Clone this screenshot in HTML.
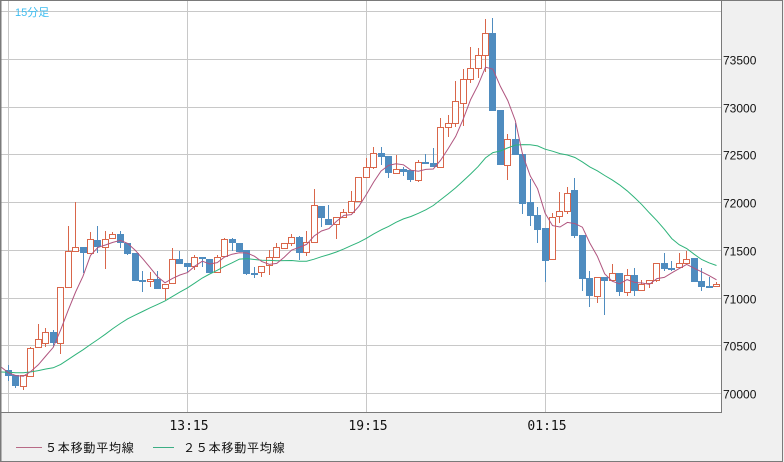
<!DOCTYPE html>
<html><head><meta charset="utf-8"><style>
html,body{margin:0;padding:0;width:784px;height:462px;overflow:hidden;background:#f0f0f0}
</style></head><body>
<svg id="s" width="784" height="462" xmlns="http://www.w3.org/2000/svg" style="position:absolute;left:0;top:0;font-family:'Liberation Sans','Noto Sans CJK JP',sans-serif">
<rect x="0" y="0" width="784" height="462" fill="#f0f0f0"/>
<rect x="1" y="1" width="720" height="411" fill="#fff"/>
<g id="grid" stroke="#c8c8c8" stroke-width="1"></g>
<g id="cand"></g>
<g id="ma"></g>
<line x1="721.5" y1="0" x2="721.5" y2="413" stroke="#7a7a7a"/>
<line x1="0" y1="412.5" x2="722" y2="412.5" stroke="#7a7a7a"/>
<rect x="0.5" y="0.5" width="782" height="461" fill="none" stroke="#7a7a7a"/>
<line x1="1" y1="0" x2="1" y2="462" stroke="#7a7a7a"/>
<text x="15" y="16" font-size="11" fill="#3cbcf0">15分足</text>
<g id="lab" font-size="12" fill="#111"></g>
<g font-size="13" fill="#111" font-family="'DejaVu Sans Mono','Liberation Mono',monospace">
<text x="189" y="430" text-anchor="middle">13:15</text>
<text x="368" y="430" text-anchor="middle">19:15</text>
<text x="547" y="430" text-anchor="middle">01:15</text>
</g>
<line x1="16" y1="447.5" x2="42" y2="447.5" stroke="#b86a86"/>
<text x="45" y="452" font-size="12" fill="#111" letter-spacing="0.8">５本移動平均線</text>
<line x1="153" y1="447.5" x2="174" y2="447.5" stroke="#3cae84"/>
<text x="183" y="452" font-size="12" fill="#111" letter-spacing="0.8">２５本移動平均線</text>
</svg>
<script>
(function(){
var NS="http://www.w3.org/2000/svg";
function el(p,t,a){var e=document.createElementNS(NS,t);for(var k in a)e.setAttribute(k,a[k]);p.appendChild(e);return e;}
var g=document.getElementById('grid'),lab=document.getElementById('lab');
var prices=[74000,73500,73000,72500,72000,71500,71000,70500,70000];
for(var i=0;i<9;i++){var y=Math.round(11+i*47.75)+0.5;el(g,'line',{x1:1,y1:y,x2:721,y2:y});
 if(i>0){var t=el(lab,'text',{x:723,y:y+5});t.textContent=prices[i];}}
[8,187,366,545].forEach(function(x){el(g,'line',{x1:x+0.5,y1:1,x2:x+0.5,y2:412});});
var D=[[370,376,365,381],[375,386,375,388],[386,375,375,390],[376,348,347,376],[347,339,324,347],[343,332,328,347],[332,343,330,347],[343,287,287,354],[287,251,226,287],[251,247,202,251],
[247,253,247,273],[253,239,232,253],[240,247,226,253],[247,239,231,269],[238,234,232,238],[234,243,231,248],[243,254,243,255],[253,281,253,281],[280,281,271,292],[281,279,272,287],
[279,289,271,289],[288,284,284,300],[283,259,248,283],[259,264,251,264],[263,267,263,272],[266,257,255,270],[257,259,257,267],[259,273,259,273],[272,257,255,272],[256,239,238,256],
[239,243,238,251],[243,252,243,252],[250,274,250,275],[273,273,267,278],[272,266,266,277],[265,257,250,275],[257,247,243,257],[248,243,243,248],[243,237,234,246],[237,253,236,260],
[252,242,231,256],[242,205,189,242],[206,218,206,227],[219,225,205,225],[224,217,217,239],[217,212,209,217],[212,201,191,212],[201,177,177,201],[177,167,158,177],[167,153,147,169],
[153,157,147,165],[156,173,156,178],[173,169,155,173],[169,172,167,176],[170,180,170,182],[180,162,160,182],[162,164,154,164],[163,167,148,167],[167,127,118,167],[127,123,115,137],
[123,101,81,127],[103,79,69,126],[79,68,47,83],[68,55,48,78],[55,33,19,72],[33,111,18,111],[110,165,110,165],[165,139,134,180],[139,155,123,155],[154,204,154,214],
[202,216,179,226],[215,230,207,243],[228,261,228,282],[259,217,213,259],[216,211,192,223],[211,193,187,214],[190,236,178,238],[235,279,235,291],[278,296,271,307],[296,277,277,303],
[277,281,277,315],[280,273,264,280],[273,292,273,296],[292,275,269,296],[275,291,268,296],[290,284,280,290],[283,280,280,288],[280,263,263,282],[263,269,253,271],[268,268,261,271],
[267,263,253,267],[263,259,251,263],[258,282,258,282],[281,287,268,291],[286,287,277,287],[286,284,282,286]];
var c=document.getElementById('cand');
var sp=(716-8)/95;
for(var i=0;i<D.length;i++){var d=D[i],x=Math.round(8+i*sp),up=d[1]<d[0];
 var bt=Math.min(d[0],d[1]),bb=Math.max(d[0],d[1]);
 if(up){el(c,'line',{x1:x+0.5,y1:d[2],x2:x+0.5,y2:bt,stroke:'#d9664a'});el(c,'line',{x1:x+0.5,y1:bb,x2:x+0.5,y2:d[3],stroke:'#d9664a'});
  el(c,'rect',{x:x-2.5,y:bt+0.5,width:6,height:Math.max(bb-bt,1),fill:'#fff',stroke:'#d9664a'});}
 else{el(c,'line',{x1:x+0.5,y1:d[2],x2:x+0.5,y2:d[3],stroke:'#4f8cbf'});
  el(c,'rect',{x:x-3,y:bt,width:7,height:Math.max(bb-bt,2),fill:'#4f8cbf'});}
}
var cl=D.map(function(d){return d[1];});
var pre=[];for(var i=0;i<24;i++)pre.push(372);
var all=pre.concat(cl);
function ma(n){var pts=[];for(var i=0;i<cl.length;i++){var s=0;for(var j=0;j<n;j++)s+=all[24+i-j];pts.push((8+i*sp+0.5).toFixed(1)+','+(s/n).toFixed(1));}return pts.join(' ');}
var m=document.getElementById('ma');
el(m,'polyline',{points:'1,372 '+ma(25),fill:'none',stroke:'#2eb37a','stroke-width':1});
el(m,'polyline',{points:'1,367 '+ma(5),fill:'none',stroke:'#b0557f','stroke-width':1});
})();
</script>
</body></html>
